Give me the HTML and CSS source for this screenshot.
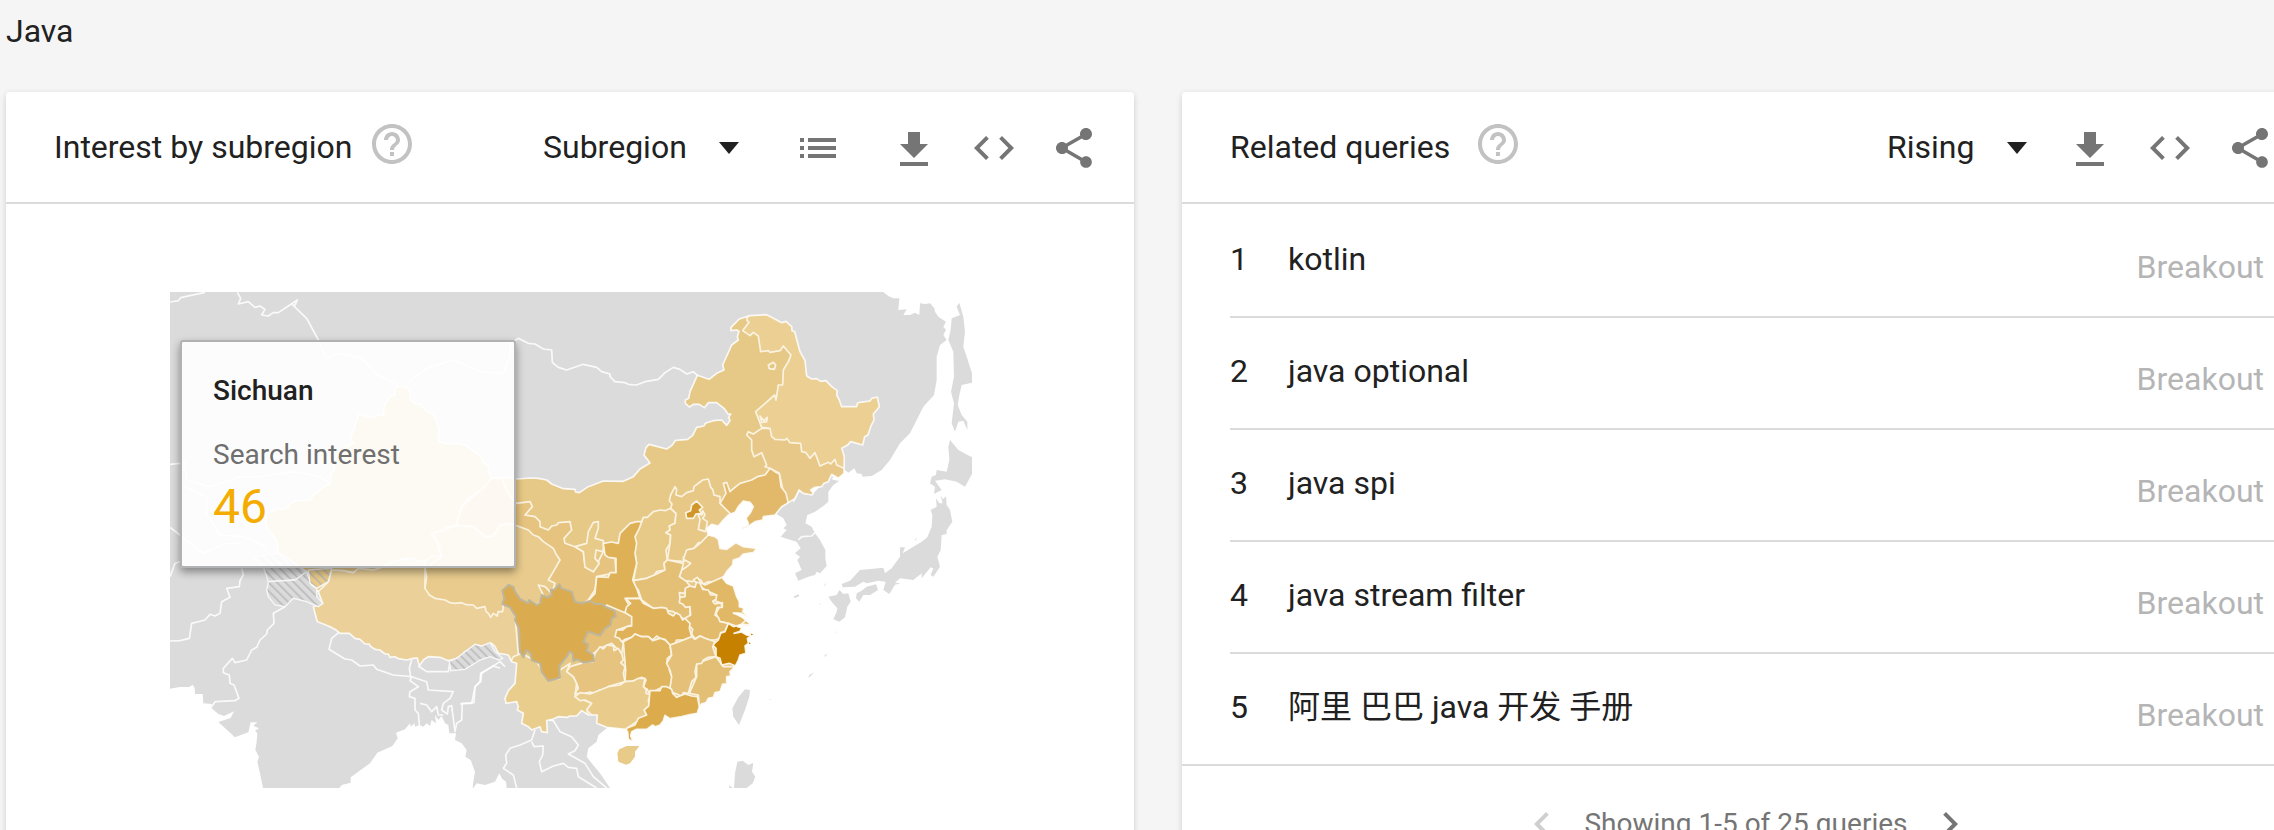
FILE: index.html
```html
<!DOCTYPE html>
<html lang="en">
<head>
<meta charset="utf-8">
<title>Java - Explore</title>
<link rel="stylesheet" href="styles.css">
</head>
<body>
<svg class="sprite" aria-hidden="true">
  <symbol id="i-help" viewBox="0 0 24 24"><path d="M11 18h2v-2h-2v2zm1-16C6.48 2 2 6.48 2 12s4.48 10 10 10 10-4.48 10-10S17.520 2 12 2zm0 18c-4.410 0-8-3.590-8-8s3.590-8 8-8 8 3.590 8 8-3.590 8-8 8zm0-14c-2.210 0-4 1.790-4 4h2c0-1.100.900-2 2-2s2 .900 2 2c0 2-3 1.750-3 5h2c0-2.250 3-2.500 3-5 0-2.210-1.790-4-4-4z"/></symbol>
  <symbol id="i-list" viewBox="0 0 24 24"><path d="M3 13h2v-2H3v2zm0 4h2v-2H3v2zm0-8h2V7H3v2zm4 4h14v-2H7v2zm0 4h14v-2H7v2zM7 7v2h14V7H7z"/></symbol>
  <symbol id="i-download" viewBox="0 0 24 24"><path d="M19 10h-4V4H9v6H5l7 7 7-7zM5 19v2h14v-2H5z"/></symbol>
  <symbol id="i-code" viewBox="0 0 24 24"><path d="M9.400 16.600L4.800 12l4.600-4.600L8 6l-6 6 6 6 1.400-1.400zm5.200 0l4.600-4.600-4.600-4.600L16 6l6 6-6 6-1.400-1.400z"/></symbol>
  <symbol id="i-share" viewBox="0 0 24 24"><path d="M18 16.080c-.760 0-1.440.300-1.960.770L8.910 12.700c.050-.230.090-.460.090-.700s-.040-.470-.090-.700l7.050-4.110c.540.500 1.250.810 2.040.810 1.660 0 3-1.340 3-3s-1.340-3-3-3-3 1.340-3 3c0 .240.040.470.090.700L8.040 9.810C7.500 9.310 6.790 9 6 9c-1.660 0-3 1.340-3 3s1.340 3 3 3c.790 0 1.500-.310 2.040-.810l7.120 4.160c-.050.210-.080.430-.080.650 0 1.610 1.310 2.920 2.920 2.920s2.920-1.310 2.920-2.920-1.310-2.920-2.920-2.920z"/></symbol>
  <symbol id="i-prev" viewBox="0 0 24 24"><path d="M15.410 7.410L14 6l-6 6 6 6 1.410-1.410L10.830 12z"/></symbol>
  <symbol id="i-next" viewBox="0 0 24 24"><path d="M10 6L8.590 7.410 13.170 12l-4.580 4.590L10 18l6-6z"/></symbol>
  <symbol id="i-caret" viewBox="0 0 20 12"><path d="M0 0h20L10 12z"/></symbol>
</svg>

<h1 class="term">Java</h1>

<main class="widgets">
  <section class="card">
    <header class="card-head">
      <h2 class="card-title">Interest by subregion</h2>
      <button class="icon-btn help" aria-label="Help"><svg class="icon"><use href="#i-help"/></svg></button>
      <span class="spacer"></span>
      <label class="picker picker-wide">
        <select class="picker-select" aria-label="Resolution"><option>Subregion</option></select>
        <svg class="caret"><use href="#i-caret"/></svg>
      </label>
      <button class="icon-btn list" aria-label="Show as list"><svg class="icon"><use href="#i-list"/></svg></button>
      <div class="actions">
        <button class="icon-btn" aria-label="Download CSV"><svg class="icon"><use href="#i-download"/></svg></button>
        <button class="icon-btn" aria-label="Embed"><svg class="icon"><use href="#i-code"/></svg></button>
        <button class="icon-btn" aria-label="Share"><svg class="icon"><use href="#i-share"/></svg></button>
      </div>
    </header>

    <div class="map">
      <svg class="map-svg" viewBox="30 36 2406 1488" role="img" aria-label="Map of China">
        <defs>
          <path id="china" d="M318 735 320 700 338 694 355 685 370 688 385 680 395 668 410 662 450 660 458 648 475 635 490 622 510 612 512 580 525 570 520 555 530 530 545 515 562 498 580 490 570 475 578 455 585 440 590 418 598 402 615 408 640 412 652 405 670 405 672 380 680 365 690 350 705 345 705 328 712 318 740 322 750 335 750 360 765 370 785 375 795 390 805 395 820 405 830 425 838 450 835 485 870 492 895 490 920 497 940 515 960 525 968 545 985 560 985 575 995 595 1030 592 1070 597 1115 594 1135 595 1160 600 1175 612 1210 626 1245 628 1247 636 1258 638 1285 620 1330 603 1390 604 1420 590 1440 567 1470 549 1452 525 1458 503 1467 493 1520 507 1535 497 1547 481 1583 478 1598 466 1610 442 1632 438 1636 430 1660 422 1685 420 1700 436 1710 422 1706 412 1712 402 1704 402 1692 385 1670 368 1645 368 1633 383 1618 373 1600 373 1588 381 1576 370 1576 360 1586 355 1590 335 1612 286 1647 298 1670 280 1692 270 1688 255 1715 195 1735 180 1732 170 1737 154 1730 150 1713 152 1713 142 1738 117 1770 107 1820 104 1850 120 1865 128 1878 124 1895 140 1896 152 1904 155 1912 185 1920 215 1935 242 1940 288 1955 297 1970 296 1982 304 1998 302 2015 320 2032 332 2030 345 2037 358 2045 380 2090 380 2092 370 2100 367 2130 363 2135 355 2152 351 2158 380 2146 395 2140 402 2142 420 2132 440 2124 465 2114 470 2108 495 2072 485 2062 496 2045 505 2050 520 2053 530 2052 580 2035 595 2015 583 2005 605 1992 610 1985 620 1965 622 1952 630 1960 640 1956 645 1930 640 1917 630 1905 655 1885 668 1865 680 1845 705 1810 710 1808 720 1785 725 1760 742 1746 748 1748 742 1762 738 1765 730 1758 715 1770 700 1780 680 1770 667 1750 663 1735 680 1725 697 1705 705 1690 720 1675 738 1655 733 1640 745 1645 765 1665 770 1675 778 1680 805 1700 808 1728 788 1750 800 1790 805 1780 818 1750 822 1738 834 1720 840 1718 855 1700 875 1688 895 1700 910 1720 918 1730 950 1738 965 1738 980 1752 985 1748 995 1765 1010 1735 1000 1720 999 1745 1010 1768 1030 1768 1037 1740 1035 1732 1040 1745 1043 1740 1054 1722 1060 1745 1056 1760 1065 1773 1068 1762 1075 1765 1090 1755 1098 1758 1120 1740 1125 1735 1140 1725 1160 1710 1175 1712 1188 1700 1190 1700 1212 1688 1212 1680 1235 1665 1238 1660 1252 1645 1255 1638 1268 1624 1272 1616 1286 1612 1300 1590 1304 1565 1310 1530 1316 1515 1306 1510 1322 1500 1335 1485 1340 1478 1335 1460 1348 1430 1348 1415 1355 1412 1368 1420 1385 1405 1378 1403 1355 1395 1348 1340 1342 1310 1330 1312 1305 1285 1305 1265 1292 1250 1308 1230 1308 1222 1312 1195 1310 1180 1317 1160 1322 1162 1358 1145 1355 1140 1340 1115 1350 1105 1340 1085 1330 1090 1300 1072 1290 1075 1280 1070 1265 1038 1270 1035 1255 1045 1232 1065 1210 1070 1150 1055 1145 1045 1125 1030 1122 1015 1120 1005 1100 995 1090 975 1096 960 1098 945 1095 935 1105 915 1115 900 1130 885 1137 865 1142 840 1132 805 1130 790 1140 778 1158 772 1134 760 1135 740 1140 715 1136 705 1130 690 1132 685 1122 675 1122 660 1110 645 1108 630 1098 628 1092 615 1092 600 1078 585 1075 568 1060 540 1060 528 1050 510 1040 490 1032 472 1025 465 1000 460 980 488 970 475 935 462 925 445 910 450 880 410 865 390 850 355 820 350 780 330 755Z"/>
          <clipPath id="china-clip"><use href="#china"/></clipPath>
          <pattern id="hatch" width="18" height="18" patternUnits="userSpaceOnUse" patternTransform="rotate(-45)"><rect width="18" height="18" fill="#dbdbdb"/><rect width="5" height="18" fill="#bcbcbc"/></pattern>
          <pattern id="hatch-gold" width="18" height="18" patternUnits="userSpaceOnUse" patternTransform="rotate(-45)"><rect width="18" height="18" fill="#e9ca87"/><rect width="5" height="18" fill="#bcb8ac"/></pattern>
        </defs>

        <rect class="land" x="30" y="36" width="2406" height="1488"/>

        <!-- seas -->
        <g class="sea">
          <path d="M1350 1524 1320 1480 1295 1450 1280 1430 1285 1405 1310 1385 1315 1365 1340 1345 1420 1300 1600 1200 1620 1000 1600 800 1640 700 1760 620 1900 640 2040 585 2055 570 2065 578 2083 565 2090 580 2105 582 2108 590 2135 588 2165 570 2190 540 2220 490 2250 460 2290 380 2322 345 2330 300 2330 230 2340 195 2360 180 2350 165 2358 150 2350 140 2358 125 2335 110 2325 95 2323 85 2310 70 2295 72 2280 70 2278 105 2265 98 2250 105 2230 105 2240 88 2215 90 2218 55 2200 55 2185 48 2170 36H2436V1524Z"/>
          <path transform="translate(0 840)" d="M30 386 42 384 60 381 88 381 98 374 104 385 105 402 128 402 130 430 155 432 155 445 175 462 192 468 222 454 212 474 175 486 225 532 265 517 272 487 292 487 280 497 297 505 285 512 292 520 290 545 286 570 297 590 292 605 300 640 309 684H30Z"/>
          <path transform="translate(0 840)" d="M538 684 545 675 572 668 572 652 630 610 652 578 697 558 713 535 708 518 735 508 750 490 752 500 763 490 765 500 778 495 790 500 800 490 810 498 815 480 828 490 825 465 835 480 845 468 855 490 865 495 868 520 888 520 885 540 905 550 920 570 916 590 932 600 945 635 940 665 938 684Z"/>
          <path transform="translate(900 600)" d="M40 924 50 910 75 915 105 905 118 880 126 896 138 905 140 924Z"/>
        </g>

        <!-- islands and peninsulas -->
        <g class="land">
          <path transform="translate(1560 30)" d="M815 85 840 75 830 50 838 38 850 80 855 125 850 170 860 200 876 250 876 278 845 285 838 315 833 345 845 375 862 395 862 420 850 392 835 395 825 425 815 400 822 340 813 305 822 260 820 185 805 150 812 120ZM810 450 835 480 876 502 876 552 855 590 830 575 795 568 765 572 785 600 762 612 765 590 750 580 755 560 768 555 770 540 800 545 808 510 805 470Z"/>
          <g transform="translate(1680 540)">
            <path d="M648 115 658 130 668 130 662 108 670 118 678 108 680 135 690 150 697 185 680 210 680 222 665 225 662 270 652 290 660 320 640 350 632 345 640 325 632 322 605 355 605 340 580 360 540 355 525 368 542 370 525 374 508 402 490 390 497 365 475 362 440 370 430 365 405 380 368 382 365 372 390 362 420 330 490 323 495 340 515 325 540 290 540 262 555 262 548 280 605 245 622 232 635 200 637 165 632 150 650 140ZM410 400 425 392 440 380 468 373 474 390 450 405 430 405 418 425 408 415ZM325 410 350 405 358 390 370 402 385 400 392 425 382 440 375 472 358 485 340 478 350 455 352 445 335 425Z"/>
            <path d="M165 160 205 125 235 95 275 105 330 50 340 60 358 62 340 75 325 95 325 125 310 138 285 155 262 165 256 190 275 200 285 220 300 240 316 270 316 295 320 318 300 340 290 335 285 345 265 350 235 362 225 340 245 330 232 300 240 290 225 280 242 265 230 245 205 238 182 230 200 210 190 205 200 195 190 175Z"/>
            <path d="M220 410 235 403 238 408 225 414ZM75 688 90 690 88 710 75 750 57 795 40 770 37 745 55 712ZM52 905 68 902 85 915 100 908 96 935 106 950 98 970 80 984 42 984 45 940ZM310 590 322 580 318 588ZM265 655 268 645 282 637 272 648ZM584 242 590 230 588 240ZM296 434 300 430 304 430ZM312 378 318 366 315 378ZM348 514 352 517 349 518ZM302 602 305 601ZM148 718 155 716 150 720ZM28 975 38 984 28 984Z"/>
          </g>
        </g>

        <!-- foreign borders -->
        <g class="border">
          <path d="M30 66 55 62 62 53 135 37M232 37 242 55 235 72 265 65 285 82 300 78 315 88 305 105 325 108 340 98 355 98 385 78 412 60 404 78 395 72 440 115 475 180 500 235 540 220 605 235 650 285 710 310M740 310 800 265 880 240 960 275 1030 280 1050 230 1052 190 1075 175 1105 190 1125 192 1150 207 1175 210 1177 247 1195 262 1220 270 1270 253 1310 262 1325 275 1350 282 1350 290 1365 305 1395 308 1405 313 1430 315 1455 305 1495 298 1515 278 1540 262 1560 268 1580 282 1600 275 1612 286"/>
          <path d="M75 545 80 600 150 620 240 590 300 590 400 575 480 590 510 612M30 553 60 550M75 620 140 650 140 700 180 765 250 770 320 800M30 742 60 765 130 820 200 790 240 790M30 890 45 850 60 845"/>
          <path d="M1915 780 1925 770 1955 768 1965 758M1900 666 1915 635M2015 585 2035 600"/>
          <g transform="translate(0 840)">
            <path d="M245 25 250 45 240 62 238 80 200 85 210 112 185 125 180 160 165 168 150 163 135 180 95 190 88 235 60 242 30 243"/>
            <path d="M375 140 340 160 342 190 322 210 320 222 300 240 290 262 275 270 260 300 225 308 217 295 190 325 190 338 208 345 210 370 222 375 237 415 225 422 165 425 155 440"/>
            <path d="M540 215 515 235 507 268 555 297 575 300 600 318 640 315 650 328 700 345 735 348 752 350 748 325 755 300M775 318 800 335 865 335 870 305"/>
            <path d="M1020 325 1000 318 962 340 960 365 945 380 935 430 907 430 905 480 890 490 885 515 875 437 865 440 862 462 845 450 850 430 870 415 880 395 805 390 800 365 755 350 750 362 775 380 750 395 748 410 765 415 765 450 775 460 778 495M780 430 800 435 815 455 830 440 835 465 850 465"/>
          </g>
          <g transform="translate(900 600)">
            <path d="M225 750 215 780 180 795 150 805 137 825 140 850 130 865 160 885 170 924M215 785 222 800 250 798 248 825 238 845 245 875 280 858 310 850 325 862 350 865 355 890 410 924M262 720 280 722 300 755 335 770 355 795 345 812 325 822 375 850 400 890 440 924M135 560 120 545 65 580 62 605 45 620 42 668 0 672"/>
          </g>
        </g>

        <!-- provinces, clipped to the country outline -->
        <use href="#china" fill="#e7c987"/>
        <g clip-path="url(#china-clip)" class="province">
          <path fill="#ebd199" d="M510 870 640 850 795 830 795 925 1060 950 1080 1180 900 1250 300 1200 300 900Z"/>
          <path fill="#e6c47f" d="M995 595 1025 592 1035 620 1050 650 1070 670 1110 665 1117 680 1095 705 1125 710 1140 725 1140 740 1165 750 1175 738 1190 735 1195 728 1230 725 1235 750 1212 775 1215 790 1245 800 1270 815 1275 855 1300 875 1330 815 1365 835 1368 878 1310 890 1305 930 1285 960 1245 990 1180 990 900 800 888 737 905 680 950 640Z"/>
          <path fill="#e9cc90" d="M300 250H995V595L972 622 950 640 925 655 905 680 895 710 888 737 860 742 842 756 815 762 832 785 845 830 815 828 800 842 780 845 760 835 740 835 715 840 690 850 665 862 640 870 595 865 580 878 550 872 515 870 505 905 475 935 300 930Z"/>
          <path fill="#e9cb8d" d="M795 865 800 890 795 925 808 945 825 955 855 960 870 968 885 970 905 968 918 974 940 975 950 985 975 980 978 994 985 1000 992 1012 1000 1000 1012 1008 1014 995 1028 995 1030 975 1110 985 1145 965 1150 945 1135 915 1155 920 1175 940 1185 910 1165 900 1180 875 1200 840 1188 822 1180 805 1150 785 1135 770 1120 765 1105 750 1050 730 1020 735 1000 768 975 770 940 740 888 737 815 762 832 785 845 830Z"/>

          <g transform="translate(1560 30)">
            <path fill="#e7c888" d="M200 435 205 425 220 432 245 415 270 415 500 400 520 600 400 660 320 650 298 550 270 535 255 530 260 525 245 488 222 500 215 480 215 450Z"/>
            <path fill="#ebcf93" d="M205 75 200 90 207 97 188 122 210 137 220 127 235 138 242 185 265 182 270 187 300 182 310 168 333 195 325 215 310 240 308 285 295 285 288 330 284 315 227 365 245 412 270 415 275 440 285 448 315 450 320 445 330 458 362 460 365 485 378 488 390 505 405 488 420 528 445 517 452 522 465 508 470 525 492 535 540 530 650 300 450 200 340 60Z"/>
            <path fill="none" d="M265 225 280 217 287 225 283 238 268 236ZM240 378 252 392 262 382 260 395 245 397Z"/>
            <path fill="#e2b96a" d="M120 640 138 610 130 580 140 577 150 605 155 600 180 580 215 570 232 560 255 555 270 535 285 545 298 552 303 590 318 610 325 640 330 760 150 760 145 670Z"/>
          </g>

          <g transform="translate(900 600)">
            <path fill="#e9cd8c" d="M160 530 185 520 230 545 265 600 300 595 300 570 330 550 320 575 340 590 350 610 345 650 395 670 380 690 400 760 250 800 100 780 100 650Z"/>
            <path fill="#e8ca89" d="M345 200 380 190 385 155 400 127 415 125 415 145 405 175 430 182 430 215 408 210 405 235 418 250 400 275 375 262 370 215Z"/>
            <path fill="#e8ca88" d="M545 125 550 112 562 112 580 95 600 90 615 92 632 85 648 100 645 130 628 138 630 150 618 158 632 165 630 190 618 210 622 240 612 250 615 270 590 275 582 286 560 295 520 302 530 250 525 220 525 170Z"/>
            <path fill="#e7c887" d="M632 85 636 72 628 62 632 45 645 20 650 28 648 45 665 50 680 38 700 32 702 20 728 0 745 -3 752 22 758 28 762 45 780 50 780 70 820 110 790 160 745 165 730 190 715 188 702 205 680 210 682 225 670 232 672 245 622 240 630 190 632 165 618 158 630 150 628 138 645 130 648 100Z"/>
            <path fill="#e7c684" d="M670 238 680 210 702 205 720 190 745 165 900 150 900 250 790 295 775 298 768 308 745 305 730 312 722 300 710 295 698 305 675 302 658 290 665 270 678 262 692 250Z"/>
            <path fill="#e4bf76" d="M520 302 560 295 582 286 615 270 612 250 622 240 670 250 665 270 658 290 680 305 690 318 680 325 672 340 658 338 660 355 672 365 690 380 690 430 640 395 580 385 545 360 535 330 525 320Z"/>
            <path fill="#e1b865" d="M700 300 712 292 722 308 735 315 790 290 900 330 900 400 850 430 835 440 805 430 780 425 768 400 785 370 760 360 770 345 735 330Z"/>
            <path fill="#e2bb6d" d="M676 325 690 318 705 322 710 306 720 310 728 328 745 330 752 345 770 345 768 358 758 364 765 372 787 368 787 382 772 382 765 405 775 412 780 425 805 430 795 455 782 458 780 475 765 480 750 480 735 475 720 468 705 476 695 462 698 448 690 440 675 415 692 405 690 380 676 382 668 372 658 368 660 352 675 350Z"/>
            <path fill="#e0b45b" d="M835 440 865 415 880 437 845 445Z"/>
            <path fill="#e3bf75" d="M768 530 790 560 850 560 900 600 750 710 718 680 715 645 688 640 710 590 710 550Z"/>
            <path fill="#c78100" d="M805 430 820 440 850 432 900 440 900 540 850 570 820 555 808 550 785 555 780 535 768 530 768 505 758 495 775 480 782 460 795 455Z"/>
            <path fill="#dfb156" d="M545 125 538 145 525 170 530 190 525 220 530 250 518 300 530 325 540 355 495 355 510 380 498 400 440 390 385 362 405 340 410 290 445 292 450 278 468 278 468 235 445 232 435 225 430 190 455 186 475 190 480 160 510 130 530 125Z"/>
            <path fill="#e4c078" d="M440 375 498 400 525 415 515 435 470 450 490 490 485 520 455 490 420 505 395 525 360 490 380 450Z"/>
            <path fill="#dfb159" d="M497 356 540 355 550 370 580 385 605 382 620 385 625 400 640 408 648 398 660 405 668 420 675 415 690 430 688 445 695 470 670 480 650 480 645 490 630 495 615 478 600 475 590 468 578 480 565 470 545 470 525 462 515 472 495 478 485 485 478 475 465 470 470 450 488 450 500 440 515 438 515 410 495 397 500 380 512 370Z"/>
            <path fill="#e6c480" d="M330 560 370 548 400 545 405 520 420 500 430 507 440 495 460 498 462 512 475 505 485 522 490 540 482 548 495 560 490 580 495 605 470 612 445 620 430 632 420 630 405 640 390 636 365 642 345 640 355 625 350 610 340 590 320 575Z"/>
            <path fill="#e0b560" d="M490 485 515 472 525 462 545 470 565 470 578 482 600 475 615 480 630 495 635 525 622 535 620 550 632 555 628 570 637 595 630 625 600 625 582 634 570 645 562 628 550 622 558 600 545 592 530 600 515 603 495 605 497 570Z"/>
            <path fill="#e4c078" d="M630 495 645 490 665 482 695 470 705 478 720 468 735 475 765 485 758 500 768 530 745 532 730 540 725 550 710 552 705 575 708 592 695 605 685 640 670 638 665 648 640 638 630 625 635 590 630 570 620 550 635 525Z"/>
            <path fill="#e9cc8c" d="M345 650 360 638 390 642 420 630 445 620 480 615 495 605 520 603 535 595 555 595 550 620 558 628 558 640 572 645 565 660 568 678 555 690 560 705 500 745 480 760 410 760 395 705 380 690 395 670 375 660 360 662Z"/>
            <path fill="#dbab4c" d="M570 632 600 632 605 620 620 620 635 628 638 640 650 652 675 642 695 648 712 650 718 680 730 720 520 800 495 785 500 745 525 735 535 715 560 705 552 690 566 678Z"/>
            <path fill="#d09629" d="M710 63 728 82 718 90 725 100 708 102 700 115 680 115 677 98 692 92 695 75Z"/>
            <path fill="#e7c887" d="M728 92 735 105 728 115 742 125 737 155 715 148 720 118 714 102 726 105Z"/>
            <path fill="none" d="M768 365 785 372 785 382M820 400 845 400 865 420 835 405"/>
          </g>
        </g>
        <use href="#china" class="outline"/>
        <path fill="#e8ca89" transform="translate(900 600)" d="M472 820 478 808 500 798 538 798 525 815 525 830 510 850 498 854 475 845Z"/>
        <path fill="#c78100" d="M1772 1060 1780 1064 1774 1066ZM1768 1086 1772 1092 1767 1092Z"/>

        <!-- disputed areas -->
        <g transform="translate(0 840)">
          <path fill="url(#hatch)" class="area" d="M280 -10 360 -20 440 35 430 45 405 60 325 65 310 20Z"/>
          <path fill="url(#hatch)" class="area" d="M325 65 405 60 440 35 455 75 470 85 470 110 488 130 475 140 440 125 400 115 375 140 345 135 325 110 320 90Z"/>
          <path fill="url(#hatch-gold)" class="area" d="M445 30 515 25 505 65 470 85 450 70Z"/>
          <path fill="url(#hatch)" class="area" d="M868 303 890 295 915 275 945 253 965 258 990 248 1003 272 1028 295 1018 300 990 290 960 300 915 328 872 332Z"/>
        </g>

        <path class="selected" transform="translate(900 600)" d="M127 332 145 315 160 320 165 335 180 357 205 370 207 360 230 375 240 370 245 345 262 352 275 345 272 330 285 328 298 313 305 325 335 335 345 365 365 370 390 363 405 372 425 372 440 383 463 392 468 408 455 415 452 435 435 445 420 467 405 462 385 455 370 485 385 493 380 512 400 525 402 543 370 548 352 538 340 543 338 520 328 515 320 530 298 557 300 593 265 603 245 575 240 550 215 540 212 522 200 510 190 532 180 515 177 445 165 420 167 408 150 382 127 372 133 355Z"/>
      </svg>

      <div class="tooltip" role="tooltip">
        <p class="tooltip-title">Sichuan</p>
        <p class="tooltip-label">Search interest</p>
        <p class="tooltip-value">46</p>
      </div>
    </div>
  </section>

  <section class="card">
    <header class="card-head">
      <h2 class="card-title">Related queries</h2>
      <button class="icon-btn help help-far" aria-label="Help"><svg class="icon"><use href="#i-help"/></svg></button>
      <span class="spacer"></span>
      <label class="picker">
        <select class="picker-select" aria-label="Sort queries"><option>Rising</option></select>
        <svg class="caret"><use href="#i-caret"/></svg>
      </label>
      <div class="actions">
        <button class="icon-btn" aria-label="Download CSV"><svg class="icon"><use href="#i-download"/></svg></button>
        <button class="icon-btn" aria-label="Embed"><svg class="icon"><use href="#i-code"/></svg></button>
        <button class="icon-btn" aria-label="Share"><svg class="icon"><use href="#i-share"/></svg></button>
      </div>
    </header>

    <ul class="queries">
      <li class="query"><span class="rank">1</span><a class="query-link" href="#">kotlin</a><span class="change">Breakout</span></li>
      <li class="query"><span class="rank">2</span><a class="query-link" href="#">java optional</a><span class="change">Breakout</span></li>
      <li class="query"><span class="rank">3</span><a class="query-link" href="#">java spi</a><span class="change">Breakout</span></li>
      <li class="query"><span class="rank">4</span><a class="query-link" href="#">java stream filter</a><span class="change">Breakout</span></li>
      <li class="query"><span class="rank">5</span><a class="query-link" href="#" lang="zh-CN">阿里 巴巴 java 开发 手册</a><span class="change">Breakout</span></li>
    </ul>

    <nav class="pager" aria-label="Pages">
      <button class="icon-btn prev" aria-label="Previous" disabled><svg class="icon"><use href="#i-prev"/></svg></button>
      <span>Showing 1-5 of 25 queries</span>
      <button class="icon-btn" aria-label="Next"><svg class="icon"><use href="#i-next"/></svg></button>
    </nav>
  </section>
</main>
</body>
</html>
```

FILE: styles.css
```css
* { box-sizing: border-box; }

body {
  margin: 0;
  height: 100vh;
  overflow: hidden;
  background: #f5f5f5;
  color: #212121;
  font: 400 32px/40px Roboto, "Noto Sans CJK SC", sans-serif;
}

h1, h2, p, ul { margin: 0; padding: 0; font-size: inherit; font-weight: 400; }
.sprite { position: absolute; width: 0; height: 0; }

.term { padding: 11px 6px 41px; }

.widgets {
  display: grid;
  grid-template-columns: 1fr 1fr;
  gap: 48px;
  margin: 0 -36px 0 6px;
}

.card {
  min-height: 780px;
  background: #fff;
  border-radius: 4px;
  box-shadow: 0 2px 6px rgba(0, 0, 0, .16);
}

.card-head {
  display: flex;
  align-items: center;
  height: 112px;
  padding: 0 36px 0 48px;
  border-bottom: 2px solid #dbdbdb;
}
.card-title { white-space: nowrap; }
.spacer { flex: 1; }

.icon-btn {
  display: block;
  flex: none;
  width: 48px;
  height: 48px;
  padding: 0;
  border: 0;
  background: none;
  color: #757575;
}
.icon { display: block; width: 48px; height: 48px; fill: currentColor; }
.help { margin: 0 0 6px 16px; color: #c2c2c2; }
.help-far { margin-left: 24px; }
.actions { display: flex; gap: 32px; margin: 2px 0 0 39px; }
.list { margin: 2px 9px 0 55px; }

.picker { display: flex; align-items: center; gap: 32px; }
.picker-select {
  appearance: none;
  margin: 0;
  padding: 0;
  border: 0;
  background: none;
  color: inherit;
  font: inherit;
}
.caret { width: 20px; height: 12px; margin-top: 2px; fill: #212121; pointer-events: none; }

.map {
  position: relative;
  width: 802px;
  max-width: 100%;
  margin: 88px 162px 0 auto;
}
.map-svg { display: block; width: 100%; }
.land { fill: #dbdbdb; }
.sea { fill: #fff; }
.border, .outline { fill: none; stroke: #fff; stroke-opacity: .85; stroke-width: 5; stroke-linejoin: round; }
.province { stroke: #fbf3e2; stroke-width: 5; stroke-linejoin: round; }
.area { stroke: #f8f8f8; stroke-width: 4; }
.selected { fill: #dbac4f; stroke: #bdb59c; stroke-width: 6; stroke-linejoin: round; }

.tooltip {
  position: absolute;
  left: 10px;
  top: 48px;
  width: 336px;
  padding: 29px 31px 27px;
  border: 2px solid #b0b2b4;
  border-radius: 3px;
  background: rgba(255, 255, 255, .9);
  background-clip: padding-box;
  box-shadow: 0 4px 8px rgba(0, 0, 0, .4);
  font-size: 28px;
}
.tooltip-title { font-weight: 500; }
.tooltip-label { margin-top: 24px; color: #6f6f6f; }
.tooltip-value { color: #f4ac00; font-size: 48px; line-height: 64px; }

.queries { padding: 2px 0 0 48px; list-style: none; }
.query {
  display: flex;
  height: 112px;
  padding: 33px 46px 0 0;
  border-bottom: 2px solid #dbdbdb;
}
.query:last-child { height: 110px; border-bottom: 0; }
.rank { width: 58px; }
.query-link { flex: 1; color: inherit; text-decoration: none; }
.change { padding-top: 8px; color: #b5b5b5; }

.pager {
  display: flex;
  justify-content: center;
  align-items: center;
  gap: 18px;
  padding: 34px 0;
  border-top: 2px solid #dbdbdb;
  color: #757575;
  font-size: 28px;
}
.prev { color: #cfcfcf; }
```
